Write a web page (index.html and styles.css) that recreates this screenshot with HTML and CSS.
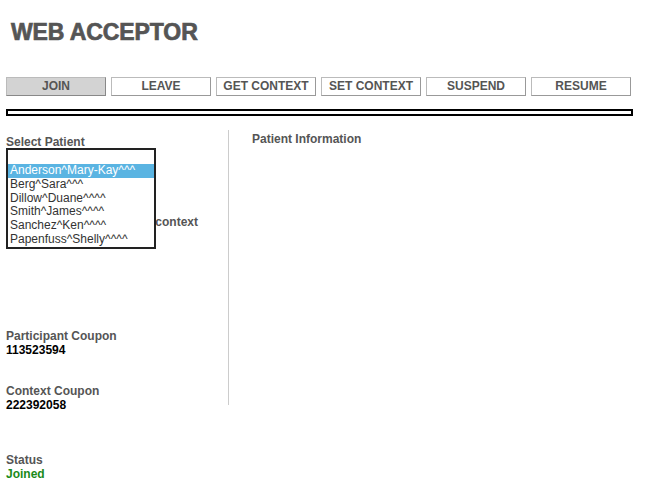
FILE: index.html
```html
<!DOCTYPE html>
<html>
<head>
<meta charset="utf-8">
<title>Web Acceptor</title>
<link rel="stylesheet" href="styles.css">
</head>
<body>
<div class="page">
  <h1 class="title">WEB ACCEPTOR</h1>
  <div class="toolbar">
    <button class="btn btn-active">JOIN</button>
    <button class="btn">LEAVE</button>
    <button class="btn">GET CONTEXT</button>
    <button class="btn">SET CONTEXT</button>
    <button class="btn">SUSPEND</button>
    <button class="btn">RESUME</button>
  </div>
  <div class="progress"></div>
  <div class="main">
    <div class="left">
      <div class="label">Select Patient</div>
      <div class="select-slot"></div>
      <div class="label follow">Follow selected patient in context</div>
      <div class="field coupon1">
        <div class="label">Participant Coupon</div>
        <div class="value">113523594</div>
      </div>
      <div class="field coupon2">
        <div class="label">Context Coupon</div>
        <div class="value">222392058</div>
      </div>
      <ul class="dropdown">
        <li class="opt"></li>
        <li class="opt selected">Anderson^Mary-Kay^^^</li>
        <li class="opt">Berg^Sara^^^</li>
        <li class="opt">Dillow^Duane^^^^</li>
        <li class="opt">Smith^James^^^^</li>
        <li class="opt">Sanchez^Ken^^^^</li>
        <li class="opt">Papenfuss^Shelly^^^^</li>
      </ul>
    </div>
    <div class="right">
      <div class="label">Patient Information</div>
    </div>
  </div>
  <div class="field status">
    <div class="label">Status</div>
    <div class="value joined">Joined</div>
  </div>
</div>
</body>
</html>
```

FILE: styles.css
```css
* { box-sizing: border-box; }
html, body { margin: 0; padding: 0; background: #fff; }
body {
  font-family: "Liberation Sans", Arial, sans-serif;
  font-size: 12px;
  color: #555;
}
.page { width: 648px; padding: 0 6px; }
.title {
  margin: 0;
  padding: 19px 0 0 5px;
  height: 77px;
  font-size: 23px;
  line-height: 27px;
  font-weight: 900;
  letter-spacing: -0.1px;
  color: #555;
  -webkit-text-stroke: 0.7px #555;
}
.toolbar { display: flex; gap: 5px; height: 19px; }
.btn {
  width: 100px;
  height: 19px;
  margin: 0;
  padding: 0 0 1px 0;
  background: #fff;
  border: 1px solid #999;
  border-top-color: #bbb;
  border-left-color: #bbb;
  font-family: "Liberation Sans", Arial, sans-serif;
  font-size: 12px;
  font-weight: bold;
  color: #555;
  line-height: 15px;
}
.btn-active { background: #d3d3d3; border-color: #bbb #888 #888 #bbb; }
.progress {
  margin-top: 13px;
  width: 627px;
  height: 7px;
  border: 2px solid #000;
  background: #fff;
}
.main { display: flex; margin-top: 14px; height: 275px; }
.left {
  position: relative;
  width: 223px;
  border-right: 1px solid #ccc;
  padding-top: 5px;
}
.right { padding-left: 23px; padding-top: 2px; }
.label { font-weight: bold; line-height: 14px; color: #555; white-space: nowrap; }
.value { font-weight: bold; line-height: 14px; color: #000; }
.joined { color: #1a8a1a; }
.select-slot { height: 66px; }
.coupon1 { margin-top: 100px; }
.coupon2 { margin-top: 27px; }
.status { margin-top: 48px; }
.dropdown {
  position: absolute;
  left: 0;
  top: 18px;
  width: 150px;
  margin: 0;
  padding: 0;
  list-style: none;
  background: #fff;
  border: 2px solid #222;
}
.opt {
  height: 13.8px;
  line-height: 13.8px;
  padding-left: 2px;
  font-size: 12px;
  color: #333;
  white-space: nowrap;
  overflow: hidden;
}
.opt:first-child { height: 14px; }
.opt.selected { background: #5ab4e2; color: #fff; }
```
